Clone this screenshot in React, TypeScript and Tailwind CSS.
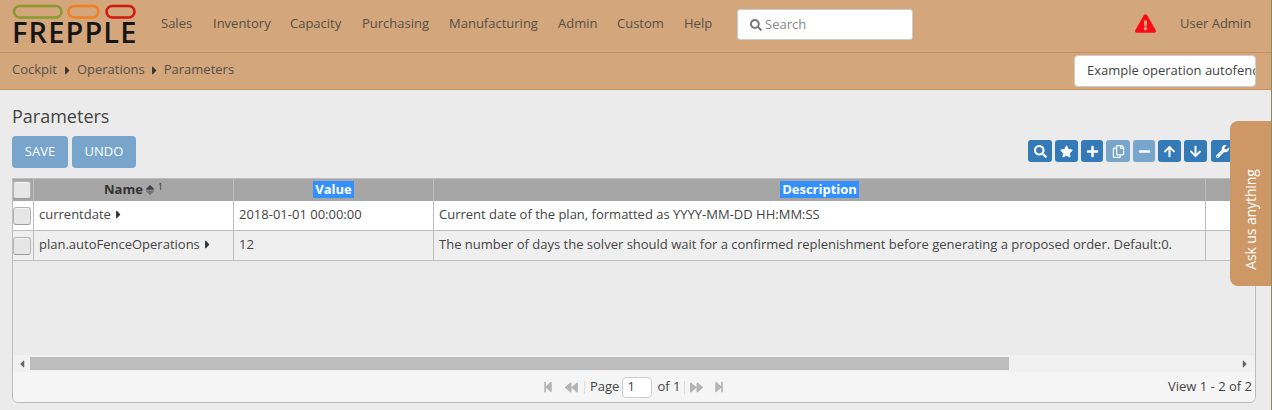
import React from "react";
import {
  FaSearch, FaStar, FaPlus, FaRegCopy, FaMinus, FaArrowUp, FaArrowDown, FaWrench,
  FaCaretRight, FaCaretLeft, FaStepBackward, FaBackward, FaForward, FaStepForward, FaExclamationTriangle,
  FaCaretUp, FaCaretDown,
} from "react-icons/fa";

const nav = [
  ["Sales", "w-[52px]"],
  ["Inventory", "w-[77px]"],
  ["Capacity", "w-[72px]"],
  ["Purchasing", "w-[87px]"],
  ["Manufacturing", "w-[109px]"],
  ["Admin", "w-[59px]"],
  ["Custom", "w-[67px]"],
  ["Help", "w-[53px]"],
];

function Check() {
  return <div className="w-[18px] h-[18px] -ml-[2px] rounded-[3px] bg-[#e6e6e6] border border-[#b5b5b5] border-b-[#9c9c9c] shadow-[inset_0_1px_0_#f5f5f5]" />;
}

function ToolBtn({ children, w, ml, off }: { children: React.ReactNode; w: string; ml: string; off?: boolean }) {
  return (
    <div className={`h-[22px] rounded-[3px] flex items-center justify-center text-white text-[13px] ${w} ${ml} ${off ? "bg-[#77a5cb]" : "bg-[#337ab7]"}`}>
      {children}
    </div>
  );
}

function Row({ name, value, desc, bg, h }: { name: string; value: string; desc: string; bg: string; h: string }) {
  return (
    <div className={`flex border-b border-[#bdbdbd] ${bg} ${h}`}>
      <div className="w-[21px] flex items-center justify-center border-r border-[#bdbdbd] shrink-0"><Check /></div>
      <div className="w-[200px] pl-[5px] pb-[2px] flex items-center border-r border-[#bdbdbd] shrink-0">
        {name}<FaCaretRight className="ml-[1px] text-[13px] text-[#333333]" />
      </div>
      <div className="w-[200px] pl-[5px] pb-[2px] flex items-center border-r border-[#bdbdbd] shrink-0">{value}</div>
      <div className="w-[772px] pl-[5px] pb-[2px] flex items-center border-r border-[#bdbdbd] shrink-0 whitespace-nowrap">{desc}</div>
      <div className="flex-1" />
    </div>
  );
}

export default function App() {
  return (
    <div className="relative w-[1272px] h-[410px] overflow-hidden bg-[#ebebeb] text-[#444444] text-[13px] font-['Open_Sans',sans-serif] border-r border-[#8a8a5c]">
      <header className="h-[53px] bg-[#d3a67c] border-b border-[#c98f58] flex items-center">
        <div className="w-[161px] pl-[12px] shrink-0 h-full flex flex-col">
          <svg width="126" height="18" viewBox="0 0 126 18" className="mt-[4px] shrink-0">
            <rect x="2" y="2" width="47.5" height="11.5" rx="5.75" fill="none" stroke="#8a9a2f" strokeWidth="2.6" />
            <rect x="56.5" y="2" width="30" height="11.5" rx="5.75" fill="none" stroke="#f08024" strokeWidth="2.6" />
            <rect x="94.5" y="2" width="28" height="11.5" rx="5.75" fill="none" stroke="#d0190f" strokeWidth="2.6" />
          </svg>
          <div className="text-[29px] leading-[22px] text-[#161616] font-semibold tracking-[1.1px] -mt-[1px]">FREPPLE</div>
        </div>
        <nav className="flex text-[13px] text-[#555048] -mt-[4px]">
          {nav.map(([n, w]) => <div key={n} className={w}>{n}</div>)}
        </nav>
        <div className="w-[176px] h-[31px] -mt-[3px] bg-white rounded-[3px] border border-[#cccccc] flex items-center pl-[12px] pt-px text-[13px] text-[#888888]">
          <FaSearch className="text-[12px] text-[#777777] mr-[3px]" />Search
        </div>
        <FaExclamationTriangle className="ml-[222px] -mt-[5px] text-[21px] text-[#fa0a14]" />
        <div className="ml-[24px] -mt-[4px] text-[13px] text-[#555048] whitespace-nowrap">User Admin</div>
      </header>
      <div className="h-[37px] bg-[#d3a67c] border-b border-[#c98f58] flex items-center pl-[12px] text-[13px] text-[#555048]">
        <div className="flex items-center flex-1 -mt-[2px]">
          <span>Cockpit</span>
          <FaCaretRight className="ml-[4px] mr-[3px] text-[13px] text-[#333333]" />
          <span>Operations</span>
          <FaCaretRight className="ml-[3px] mr-[3px] text-[13px] text-[#333333]" />
          <span>Parameters</span>
        </div>
        <div className="mr-[15px] w-[182px] shrink-0 h-[32px] bg-white rounded-[4px] border border-[#cccccc] pl-[12px] flex items-center overflow-hidden whitespace-nowrap text-[#444444]">
          Example operation autofence
        </div>
      </div>
      <main className="pl-[12px] pr-[15px]">
        <h1 className="text-[18px] leading-[24px] mt-[14px] text-[#444444]">Parameters</h1>
        <div className="flex items-center mt-[8px] h-[32px]">
          <div className="w-[56px] h-[32px] bg-[#77a5cb] rounded-[4px] text-white text-[13px] font-medium flex items-center justify-center">SAVE</div>
          <div className="w-[64px] h-[32px] ml-[4px] bg-[#77a5cb] rounded-[4px] text-white text-[13px] font-medium flex items-center justify-center">UNDO</div>
          <div className="flex ml-auto mr-[26px] -mt-[2px] overflow-hidden w-[202px]">
            <ToolBtn w="w-[24px] shrink-0" ml=""><FaSearch /></ToolBtn>
            <ToolBtn w="w-[23px] shrink-0" ml="ml-[3px]"><FaStar /></ToolBtn>
            <ToolBtn w="w-[22px] shrink-0" ml="ml-[3px]"><FaPlus /></ToolBtn>
            <ToolBtn w="w-[24px] shrink-0" ml="ml-[3px]" off><FaRegCopy /></ToolBtn>
            <ToolBtn w="w-[22px] shrink-0" ml="ml-[3px]" off><FaMinus /></ToolBtn>
            <ToolBtn w="w-[23px] shrink-0" ml="ml-[3px]"><FaArrowUp /></ToolBtn>
            <ToolBtn w="w-[23px] shrink-0" ml="ml-[3px]"><FaArrowDown /></ToolBtn>
            <ToolBtn w="w-[23px] shrink-0" ml="ml-[4px]"><FaWrench /></ToolBtn>
          </div>
        </div>
        <div className="mt-[10px] w-[1244px] h-[225px] border border-[#bdbdbd] rounded-b-[6px] flex flex-col overflow-hidden bg-[#ebebeb]">
          <div className="flex h-[22px] bg-[#a6a6a6] text-[13px] font-bold text-[#333333] shrink-0">
            <div className="w-[21px] flex items-center justify-center border-r border-[#bdbdbd] shrink-0"><Check /></div>
            <div className="w-[200px] pb-px flex items-center justify-center border-r border-[#bdbdbd] shrink-0">
              <span>Name</span>
              <span className="flex flex-col text-[#757575] text-[14px] -space-y-[9px]"><FaCaretUp className="text-[#444444]" /><FaCaretDown /></span>
              <span className="text-[9px] font-normal ml-[1px] -mt-[6px]">1</span>
            </div>
            <div className="w-[200px] pb-px flex items-center justify-center border-r border-[#bdbdbd] shrink-0">
              <span className="bg-[#3390ff] text-white px-[2px] leading-[17px]">Value</span>
            </div>
            <div className="w-[772px] pb-px flex items-center justify-center border-r border-[#bdbdbd] shrink-0">
              <span className="bg-[#3390ff] text-white px-[2px] leading-[17px]">Description</span>
            </div>
            <div className="flex-1" />
          </div>
          <Row h="h-[30px]" bg="bg-white" name="currentdate" value="2018-01-01 00:00:00" desc="Current date of the plan, formatted as YYYY-MM-DD HH:MM:SS" />
          <Row h="h-[30px]" bg="bg-[#efefef]" name="plan.autoFenceOperations" value="12" desc="The number of days the solver should wait for a confirmed replenishment before generating a proposed order. Default:0." />
          <div className="flex-1" />
          <div className="h-[17px] bg-[#f1f1f1] flex items-center shrink-0">
            <FaCaretLeft className="ml-[3px] text-[12px] text-[#666666]" />
            <div className="ml-[2px] w-[979px] h-[13px] bg-[#bdbdbd]" />
            <FaCaretRight className="ml-auto mr-[4px] text-[12px] text-[#666666]" />
          </div>
          <div className="h-[30px] bg-[#f5f5f5] flex items-center shrink-0">
            <div className="flex items-center text-[#b4b4b4] text-[12px] ml-[529px]">
              <FaStepBackward />
              <FaBackward className="ml-[11px] text-[13px]" />
              <span className="ml-[6px] mr-[5px] w-px h-[13px] bg-[#dddddd]" />
              <span className="text-[#444444] text-[13px]">Page</span>
              <div className="ml-[3px] w-[30px] h-[21px] bg-white border border-[#cccccc] rounded-[4px] text-[#444444] text-[13px] pl-[4px] flex items-center">1</div>
              <span className="ml-[5px] text-[#444444] text-[13px]">of 1</span>
              <span className="ml-[4px] mr-[5px] w-px h-[13px] bg-[#dddddd]" />
              <FaForward className="text-[13px]" />
              <FaStepForward className="ml-[10px]" />
            </div>
            <div className="ml-auto text-[13px] text-[#444444] mr-[3px]">View 1 - 2 of 2</div>
          </div>
        </div>
      </main>
      <div className="absolute left-[1230px] top-[121px] w-[41px] h-[165px] bg-[#cd9866] rounded-l-[8px] flex items-center justify-center">
        <span className="text-white text-[14px] font-medium tracking-[-0.1px] whitespace-nowrap -rotate-90 translate-y-[16px]">Ask us anything</span>
      </div>
    </div>
  );
}
